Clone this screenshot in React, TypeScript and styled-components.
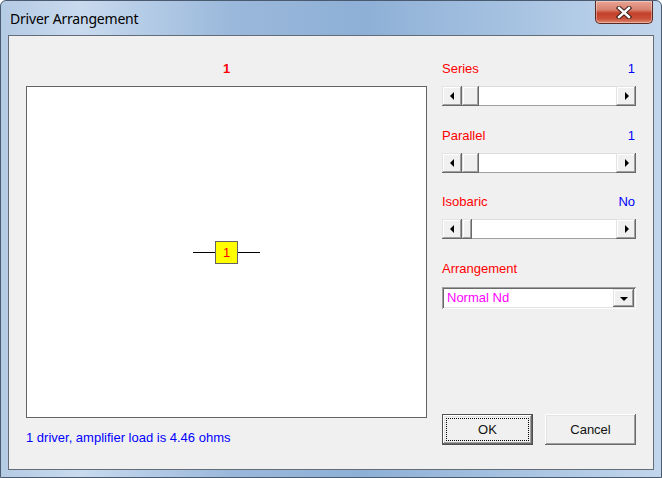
import styled, { createGlobalStyle } from "styled-components";

const GlobalStyle = createGlobalStyle`
  html, body {
    margin: 0;
    padding: 0;
    background: #ffffff;
  }
  * {
    box-sizing: border-box;
  }
`;

// window chrome
const Window = styled.div`
  width: 662px;
  height: 478px;
  display: flex;
  flex-direction: column;
  padding: 0 7px 7px 7px;
  border: 1px solid #4a5b70;
  border-radius: 6px 6px 0 0;
  background: linear-gradient(
    to right,
    #b4cbe4 0%,
    #c8daee 12%,
    #9ab8db 35%,
    #8eb0d6 55%,
    #a3c0e0 75%,
    #c2d6ec 100%
  );
  font-family: "Liberation Sans", Arial, sans-serif;
  font-size: 13px;
`;

const TitleBar = styled.div`
  height: 34px;
  display: flex;
  justify-content: space-between;
  align-items: flex-start;
`;

const Title = styled.div`
  padding: 9px 0 0 2px;
  font-family: "Noto Sans", "Open Sans", sans-serif;
  font-size: 14px;
  line-height: 18px;
  color: #000;
  letter-spacing: -0.2px;
`;

const CloseButton = styled.div`
  width: 58px;
  height: 23px;
  margin-right: 1px;
  display: flex;
  align-items: center;
  justify-content: center;
  border: 1px solid #5c2a22;
  border-top: none;
  border-radius: 0 0 5px 5px;
  background: linear-gradient(
    to bottom,
    #e8a595 0%,
    #d8816e 40%,
    #c4412a 55%,
    #c9503a 80%,
    #e08b70 100%
  );
  box-shadow: inset 0 0 0 1px rgba(255, 255, 255, 0.35);
`;

const Content = styled.div`
  flex: 1;
  display: grid;
  grid-template-columns: 401px 194px;
  column-gap: 15px;
  padding: 25px 17px 23px 17px;
  background: #f0f0f0;
  border: 1px solid #646c78;
`;

// left side
const LeftColumn = styled.div`
  display: flex;
  flex-direction: column;
`;

const CanvasTitle = styled.div`
  height: 16px;
  line-height: 16px;
  text-align: center;
  color: #ff0000;
  font-weight: bold;
`;

const Canvas = styled.div`
  margin-top: 9px;
  height: 332px;
  background: #ffffff;
  border: 1px solid #646464;
  display: flex;
  align-items: center;
  justify-content: center;
`;

const Wire = styled.div`
  width: 22px;
  height: 1px;
  background: #000;
`;

const DriverBox = styled.div`
  width: 23px;
  height: 23px;
  background: #ffff00;
  border: 1px solid #646464;
  color: #ff0000;
  display: flex;
  align-items: center;
  justify-content: center;
  line-height: 1;
`;

const Status = styled.div`
  margin-top: 12px;
  line-height: 16px;
  color: #0000ff;
`;

// right side
const RightColumn = styled.div`
  display: flex;
  flex-direction: column;
`;

const LabelRow = styled.div<{ $gap: number }>`
  margin-top: ${(p) => p.$gap}px;
  height: 16px;
  line-height: 16px;
  display: flex;
  justify-content: space-between;
  color: #ff0000;
`;

const Value = styled.span`
  color: #0000ff;
  padding-right: 1px;
`;

const raised = `
  background: #f0f0f0;
  box-shadow: inset -1px -1px #696969, inset 1px 1px #e3e3e3,
    inset -2px -2px #a0a0a0, inset 2px 2px #ffffff;
`;

const ScrollBar = styled.div`
  margin-top: 9px;
  height: 20px;
  display: flex;
  background: #ffffff;
`;

const ArrowButton = styled.div`
  width: 20px;
  height: 20px;
  flex: none;
  display: flex;
  align-items: center;
  justify-content: center;
  ${raised}
`;

const Arrow = styled.span<{ $dir: "left" | "right" | "down" }>`
  width: 0;
  height: 0;
  border-style: solid;
  border-color: transparent;
  ${(p) =>
    p.$dir === "left"
      ? "border-width: 4px 4px 4px 0; border-right-color: #000; margin-left: -1px;"
      : p.$dir === "right"
      ? "border-width: 4px 0 4px 4px; border-left-color: #000; margin-left: 1px;"
      : "border-width: 4px 4px 0 4px; border-top-color: #000; margin-top: 1px;"}
`;

const Thumb = styled.div<{ $w: number }>`
  width: ${(p) => p.$w}px;
  height: 20px;
  flex: none;
  ${raised}
`;

const Track = styled.div`
  flex: 1;
  box-shadow: inset 0 1px #dcdcdc, inset 0 -1px #a0a0a0;
`;

const Dropdown = styled.div`
  margin-top: 10px;
  height: 22px;
  padding: 2px;
  display: flex;
  align-items: center;
  background: #ffffff;
  box-shadow: inset 1px 1px #a0a0a0, inset -1px -1px #ffffff,
    inset 2px 2px #696969, inset -2px -2px #e3e3e3;
`;

const DropdownText = styled.div`
  flex: 1;
  padding-left: 3px;
  color: #ff00ff;
  line-height: 18px;
`;

const DropdownButton = styled(ArrowButton)`
  width: 21px;
  height: 18px;
`;

const ButtonRow = styled.div`
  margin-top: auto;
  margin-bottom: 1px;
  display: flex;
  justify-content: space-between;
`;

const PushButton = styled.div<{ $default?: boolean }>`
  width: 91px;
  height: 31px;
  display: flex;
  align-items: center;
  justify-content: center;
  color: #111;
  position: relative;
  background: #f0f0f0;
  box-shadow: ${(p) =>
    p.$default
      ? "inset 0 0 0 1px #505050, inset -2px -2px #696969, inset 2px 2px #ffffff, inset -3px -3px #a0a0a0, inset 3px 3px #e3e3e3"
      : "inset -1px -1px #696969, inset 1px 1px #ffffff, inset -2px -2px #a0a0a0, inset 2px 2px #e3e3e3"};
`;

const FocusRing = styled.div`
  position: absolute;
  inset: 4px;
  border: 1px dotted #000;
`;

interface SliderProps {
  label: string;
  value: string;
  gap: number;
  thumb: number;
}

const Slider = ({ label, value, gap, thumb }: SliderProps) => (
  <>
    <LabelRow $gap={gap}>
      <span>{label}</span>
      <Value>{value}</Value>
    </LabelRow>
    <ScrollBar>
      <ArrowButton>
        <Arrow $dir="left" />
      </ArrowButton>
      <Thumb $w={thumb} />
      <Track />
      <ArrowButton>
        <Arrow $dir="right" />
      </ArrowButton>
    </ScrollBar>
  </>
);

const App = () => {
  return (
    <>
      <GlobalStyle />
      <Window>
        <TitleBar>
          <Title>Driver Arrangement</Title>
          <CloseButton>
            <svg width="16" height="13" viewBox="0 0 16 13">
              <path
                d="M3 2 L13 11 M13 2 L3 11"
                stroke="#3b1f1a"
                strokeWidth="4.4"
                strokeLinecap="square"
              />
              <path
                d="M3 2 L13 11 M13 2 L3 11"
                stroke="#ffffff"
                strokeWidth="2.4"
                strokeLinecap="square"
              />
            </svg>
          </CloseButton>
        </TitleBar>
        <Content>
          <LeftColumn>
            <CanvasTitle>1</CanvasTitle>
            <Canvas>
              <Wire />
              <DriverBox>1</DriverBox>
              <Wire />
            </Canvas>
            <Status>1 driver, amplifier load is 4.46 ohms</Status>
          </LeftColumn>
          <RightColumn>
            <Slider label="Series" value="1" gap={0} thumb={17} />
            <Slider label="Parallel" value="1" gap={22} thumb={17} />
            <Slider label="Isobaric" value="No" gap={21} thumb={10} />
            <LabelRow $gap={22}>
              <span>Arrangement</span>
            </LabelRow>
            <Dropdown>
              <DropdownText>Normal Nd</DropdownText>
              <DropdownButton>
                <Arrow $dir="down" />
              </DropdownButton>
            </Dropdown>
            <ButtonRow>
              <PushButton $default>
                <FocusRing />
                OK
              </PushButton>
              <PushButton>Cancel</PushButton>
            </ButtonRow>
          </RightColumn>
        </Content>
      </Window>
    </>
  );
};

export default App;
